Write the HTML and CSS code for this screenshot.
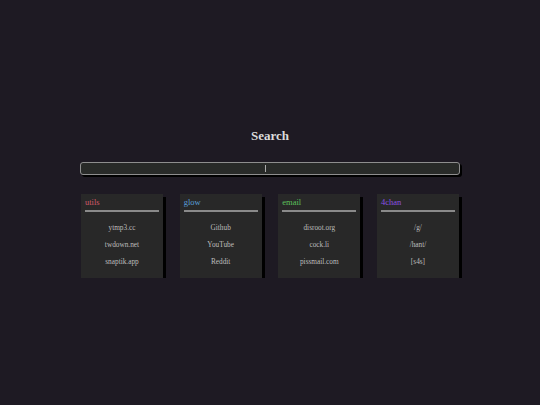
FILE: index.html
```html
<!DOCTYPE html>
<html lang="en">
<head>
<meta charset="UTF-8">
<meta name="viewport" content="width=device-width, initial-scale=1.0">
<title>Startpage</title>
<link rel="stylesheet" href="styles.css">
</head>
<body>

<div class="container">
    <h2>Search</h2>
    <div class="search-box">
        <input type="text" id="search" name="search">
    </div>
    <div class="cards">
        <div class="card">
            <div class="card-title utils">utils</div>
            <a href="#">ytmp3.cc</a>
            <a href="#">twdown.net</a>
            <a href="#">snaptik.app</a>
        </div>
        <div class="card">
            <div class="card-title glow">glow</div>
            <a href="#">Github</a>
            <a href="#">YouTube</a>
            <a href="#">Reddit</a>
        </div>
        <div class="card">
            <div class="card-title email">email</div>
            <a href="#">disroot.org</a>
            <a href="#">cock.li</a>
            <a href="#">pissmail.com</a>
        </div>
        <div class="card">
            <div class="card-title chan">4chan</div>
            <a href="#">/g/</a>
            <a href="#">/hant/</a>
            <a href="#">[s4s]</a>
        </div>
    </div>
</div>

</body>
</html>
```

FILE: styles.css
```css
body {
    font-family: "Liberation Serif", "Times New Roman", serif;
    margin: 0;
    padding: 0;
    background-color: #1e1a23;
    color: #c8c8c8;
}
.container {
    width: 380px;
    margin: 0 auto;
    padding-top: 128px;
}
h2 {
    margin: 0 0 18px;
    font-size: 13px;
    text-align: center;
    color: #dcdcdc;
}
.search-box {
    position: relative;
}
.search-box::after {
    content: "";
    position: absolute;
    left: 185px;
    top: 3px;
    width: 1px;
    height: 7px;
    background-color: #aaa;
}
.search-box input {
    display: block;
    width: 100%;
    height: 13px;
    padding: 0;
    border: 1px solid #8e8e8e;
    border-radius: 3px;
    background-color: #282a28;
    box-shadow: 2px 2px 0 #000;
    box-sizing: border-box;
    outline: none;
}
.cards {
    display: grid;
    grid-template-columns: repeat(4, 82px);
    justify-content: space-between;
    margin: 19px 1px 0;
}
.card {
    height: 84px;
    padding: 3px 4px 0;
    background-color: #282828;
    box-shadow: 3px 3px 0 #000;
    box-sizing: border-box;
}
.card-title {
    font-size: 8.5px;
    line-height: 11px;
    padding-bottom: 2px;
    border-bottom: 2px solid #8a8a8a;
    margin-bottom: 7px;
}
.card a {
    display: block;
    font-size: 7.3px;
    line-height: 17px;
    text-align: center;
    color: #bdbdbd;
    text-decoration: none;
}
.utils { color: #d05a68; }
.glow { color: #5a9fd8; }
.email { color: #5cc05c; }
.chan { color: #8a50e0; }
```
